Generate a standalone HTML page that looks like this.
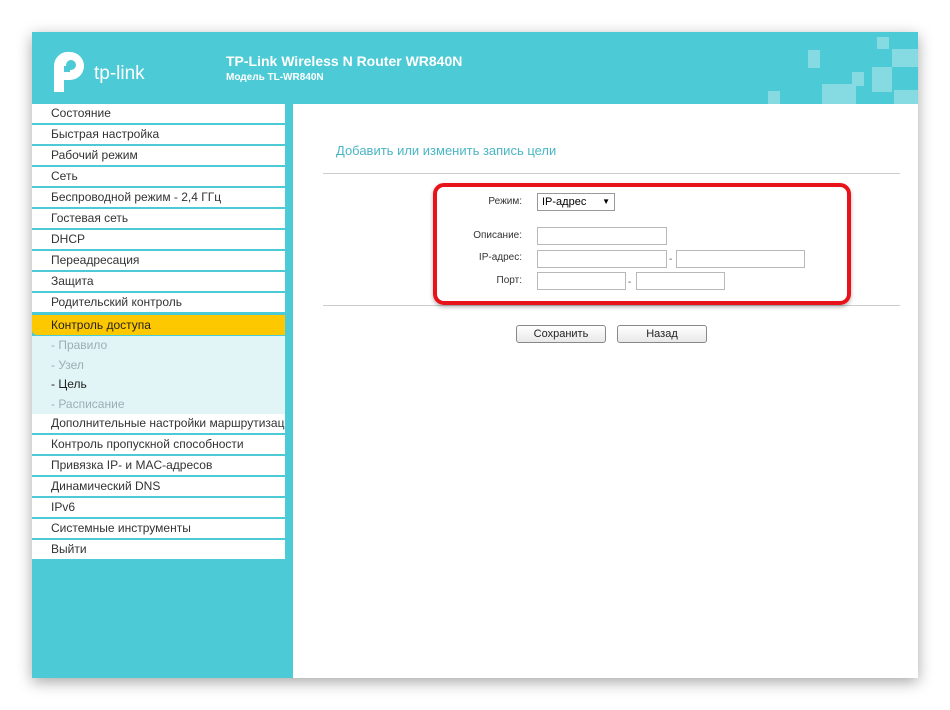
<!DOCTYPE html>
<html><head><meta charset="utf-8"><style>
*{margin:0;padding:0;box-sizing:border-box}
body{width:950px;height:710px;background:#fff;font-family:"Liberation Sans",Arial,sans-serif;position:relative;overflow:hidden}
#frame{position:absolute;left:32px;top:32px;width:886px;height:646px;box-shadow:0 4px 14px rgba(0,0,0,.35);background:#fff}
#hdr{position:absolute;left:0;top:0;width:886px;height:72px;background:#4ccad5}
#side{position:absolute;left:0;top:72px;width:261px;height:574px;background:#4ccad5}
.m{position:absolute;left:0;width:253px;height:19px;background:#fff;font-size:12px;color:#333;padding-left:19px;line-height:19px;white-space:nowrap;overflow:hidden}
.sub{position:absolute;left:0;top:232px;width:253px;height:78px;background:#e1f4f6}
.s{position:absolute;left:19px;font-size:12px;color:#9ab0b4}
.a{position:absolute;font-size:10px;color:#333;text-align:right;width:100px}
.in{position:absolute;border:1px solid #b8b8b8;background:#fff;height:18px}
.btn{position:absolute;border:1px solid #888;border-radius:3px;background:linear-gradient(#fff,#e8e8e8);height:18px;font-size:11px;text-align:center;line-height:16px;color:#222}
.sq{position:absolute;background:#86dae1}
</style></head><body>
<div id="frame">
<div id="hdr">
<svg style="position:absolute;left:20px;top:18px" width="38" height="44" viewBox="0 0 38 44"><path d="M18 2 A14 14 0 0 1 18 30 L18 30 L12 30 L12 42 L2 42 L2 16 A14 14 0 0 1 18 2 Z" fill="#fff"/><rect x="2" y="16" width="16" height="6" fill="#4ccad5"/><circle cx="19" cy="15" r="5" fill="#4ccad5"/><rect x="2" y="16" width="10" height="6" fill="#fff"/></svg>
<div style="position:absolute;left:62px;top:31px;color:#fff;font-size:19px">tp-link</div>
<div style="position:absolute;left:194px;top:21px;color:#fff;font-size:14px;font-weight:bold">TP-Link Wireless N Router WR840N</div>
<div style="position:absolute;left:194px;top:40px;color:#fff;font-size:10px;font-weight:bold">Модель TL-WR840N</div>
<div class="sq" style="left:776px;top:18px;width:12px;height:18px"></div>
<div class="sq" style="left:820px;top:40px;width:12px;height:14px"></div>
<div class="sq" style="left:790px;top:52px;width:34px;height:20px"></div>
<div class="sq" style="left:736px;top:59px;width:12px;height:13px"></div>
<div class="sq" style="left:845px;top:5px;width:12px;height:12px"></div>
<div class="sq" style="left:860px;top:17px;width:26px;height:18px"></div>
<div class="sq" style="left:840px;top:35px;width:20px;height:25px"></div>
<div class="sq" style="left:862px;top:58px;width:24px;height:14px"></div>
</div>
<div id="side">
<div class="m" style="top:0">Состояние</div>
<div class="m" style="top:21px">Быстрая настройка</div>
<div class="m" style="top:42px">Рабочий режим</div>
<div class="m" style="top:63px">Сеть</div>
<div class="m" style="top:84px">Беспроводной режим - 2,4 ГГц</div>
<div class="m" style="top:105px">Гостевая сеть</div>
<div class="m" style="top:126px">DHCP</div>
<div class="m" style="top:147px">Переадресация</div>
<div class="m" style="top:168px">Защита</div>
<div class="m" style="top:189px">Родительский контроль</div>
<div class="m" style="top:211px;background:#fec800;color:#222;height:20px;line-height:20px;border-radius:0 0 0 5px">Контроль доступа</div>
<div class="sub">
<div class="s" style="top:2px">- Правило</div>
<div class="s" style="top:22px">- Узел</div>
<div class="s" style="top:41px;color:#222">- Цель</div>
<div class="s" style="top:61px">- Расписание</div>
</div>
<div class="m" style="top:310px">Дополнительные настройки маршрутизации</div>
<div class="m" style="top:331px">Контроль пропускной способности</div>
<div class="m" style="top:352px">Привязка IP- и MAC-адресов</div>
<div class="m" style="top:373px">Динамический DNS</div>
<div class="m" style="top:394px">IPv6</div>
<div class="m" style="top:415px">Системные инструменты</div>
<div class="m" style="top:436px">Выйти</div>
</div>
</div>
<div style="position:absolute;left:336px;top:143px;font-size:13px;color:#4ab6c4">Добавить или изменить запись цели</div>
<div style="position:absolute;left:323px;top:173px;width:577px;height:1px;background:#ccc"></div>
<div style="position:absolute;left:323px;top:305px;width:577px;height:1px;background:#ccc"></div>
<div class="a" style="left:422px;top:196px">Режим:</div>
<div class="in" style="left:537px;top:193px;width:78px;font-size:11px;line-height:16px;padding-left:4px;border-color:#999">IP-адрес<span style="position:absolute;right:4px;font-size:8px">▼</span></div>
<div class="a" style="left:422px;top:230px">Описание:</div>
<div class="in" style="left:537px;top:227px;width:130px"></div>
<div class="a" style="left:422px;top:252px">IP-адрес:</div>
<div class="in" style="left:537px;top:250px;width:130px"></div>
<div style="position:absolute;left:669px;top:254px;font-size:10px;color:#555">-</div>
<div class="in" style="left:676px;top:250px;width:129px"></div>
<div class="a" style="left:422px;top:275px">Порт:</div>
<div class="in" style="left:537px;top:272px;width:89px"></div>
<div style="position:absolute;left:628px;top:277px;font-size:10px;color:#555">-</div>
<div class="in" style="left:636px;top:272px;width:89px"></div>
<div style="position:absolute;left:433px;top:183px;width:418px;height:122px;border:4px solid #e8121a;border-radius:11px;box-shadow:0 2px 4px rgba(0,0,0,.3)"></div>
<div class="btn" style="left:516px;top:325px;width:90px">Сохранить</div>
<div class="btn" style="left:617px;top:325px;width:90px">Назад</div>
</body></html>
